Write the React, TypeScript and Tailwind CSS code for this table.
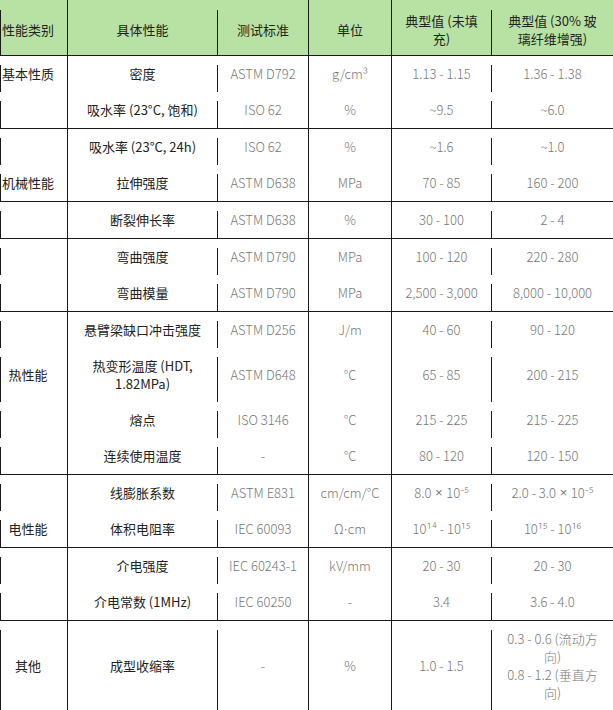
import type { ReactNode } from "react";
import clsx from "clsx";

type Row = {
  cat?: string;
  prop: ReactNode;
  std: string;
  unit: ReactNode;
  v1: ReactNode;
  v2: ReactNode;
};

// latin glyphs that the CJK font draws too wide
const L = ({ children }: { children: ReactNode }) => (
  <span className="whitespace-pre" style={{ fontFamily: '"Liberation Sans", sans-serif' }}>
    {children}
  </span>
);

const groups: Row[][] = [
  [
    { cat: "基本性质", prop: "密度", std: "ASTM D792", unit: "g/cm³", v1: "1.13 - 1.15", v2: "1.36 - 1.38" },
    { prop: "吸水率 (23°C, 饱和)", std: "ISO 62", unit: "%", v1: "~9.5", v2: "~6.0" },
  ],
  [
    { prop: "吸水率 (23°C, 24h)", std: "ISO 62", unit: "%", v1: "~1.6", v2: "~1.0" },
    { cat: "机械性能", prop: "拉伸强度", std: "ASTM D638", unit: "MPa", v1: "70 - 85", v2: "160 - 200" },
  ],
  [{ prop: "断裂伸长率", std: "ASTM D638", unit: "%", v1: "30 - 100", v2: "2 - 4" }],
  [
    { prop: "弯曲强度", std: "ASTM D790", unit: "MPa", v1: "100 - 120", v2: "220 - 280" },
    { prop: "弯曲模量", std: "ASTM D790", unit: "MPa", v1: "2,500 - 3,000", v2: "8,000 - 10,000" },
  ],
  [
    { prop: "悬臂梁缺口冲击强度", std: "ASTM D256", unit: "J/m", v1: "40 - 60", v2: "90 - 120" },
    {
      cat: "热性能",
      prop: (
        <>
          热变形温度 (HDT,
          <br />
          1.82MPa)
        </>
      ),
      std: "ASTM D648",
      unit: "°C",
      v1: "65 - 85",
      v2: "200 - 215",
    },
    { prop: "熔点", std: "ISO 3146", unit: "°C", v1: "215 - 225", v2: "215 - 225" },
    { prop: "连续使用温度", std: "-", unit: "°C", v1: "80 - 120", v2: "120 - 150" },
  ],
  [
    {
      prop: "线膨胀系数",
      std: "ASTM E831",
      unit: "cm/cm/°C",
      v1: (
        <>
          8.0<L>{" × "}</L>10⁻⁵
        </>
      ),
      v2: (
        <>
          2.0 - 3.0<L>{" × "}</L>10⁻⁵
        </>
      ),
    },
    {
      cat: "电性能",
      prop: "体积电阻率",
      std: "IEC 60093",
      unit: (
        <>
          Ω<L>·</L>cm
        </>
      ),
      v1: "10¹⁴ - 10¹⁵",
      v2: "10¹⁵ - 10¹⁶",
    },
  ],
  [
    { prop: "介电强度", std: "IEC 60243-1", unit: "kV/mm", v1: "20 - 30", v2: "20 - 30" },
    { prop: "介电常数 (1MHz)", std: "IEC 60250", unit: "-", v1: "3.4", v2: "3.6 - 4.0" },
  ],
  [
    {
      cat: "其他",
      prop: "成型收缩率",
      std: "-",
      unit: "%",
      v1: "1.0 - 1.5",
      v2: (
        <>
          0.3 - 0.6 (流动方
          <br />
          向)
          <br />
          0.8 - 1.2 (垂直方
          <br />
          向)
        </>
      ),
    },
  ],
];

// broken = short vertical segment that starts a bit below the row top
const Cell = ({
  broken,
  head,
  className,
  children,
}: {
  broken?: boolean;
  head?: boolean;
  className?: string;
  children?: ReactNode;
}) => (
  <div className={clsx("flex", !broken && "border-l border-[#1a1a1a]")}>
    {broken && (
      <div className={clsx("w-px shrink-0 bg-[#1a1a1a]", head ? "mt-[10px]" : "mt-[9px]")} />
    )}
    <div
      className={clsx(
        "flex-1 flex items-center justify-center text-center leading-[18px]",
        head ? "pt-[12px] pb-[7px]" : "py-[9px]",
        className
      )}
    >
      {children}
    </div>
  </div>
);

const gridCols = "grid grid-cols-[67px_150px_91px_83px_100px_122px]";
const grey = "text-[#777] font-light whitespace-nowrap";

export default function App() {
  return (
    <div
      className="w-[613px] h-[710px] overflow-hidden bg-white text-[13px] text-[#222]"
      style={{ fontFamily: '"Noto Sans CJK SC", "Noto Sans", sans-serif' }}
    >
      <div className={clsx(gridCols, "bg-[#b8e2a3] border-b border-[#1a1a1a]")}>
        <Cell broken head className="pr-[12px] whitespace-nowrap">
          性能类别
        </Cell>
        <Cell head>具体性能</Cell>
        <Cell broken head>
          测试标准
        </Cell>
        <Cell head>单位</Cell>
        <Cell head>
          典型值 (未填
          <br />
          充)
        </Cell>
        <Cell broken head>
          典型值 (30% 玻
          <br />
          璃纤维增强)
        </Cell>
      </div>

      {groups.map((rows, gi) => (
        <div
          key={gi}
          className={clsx("flex flex-col", gi < groups.length - 1 && "border-b border-[#1a1a1a]")}
        >
          {rows.map((r, ri) => (
            <div key={ri} className={gridCols}>
              <Cell broken className="pr-[12px] whitespace-nowrap">
                {r.cat}
              </Cell>
              <Cell className="px-1">{r.prop}</Cell>
              <Cell broken className={grey}>
                {r.std}
              </Cell>
              <Cell className={grey}>{r.unit}</Cell>
              <Cell className={grey}>{r.v1}</Cell>
              <Cell broken className={grey}>
                {r.v2}
              </Cell>
            </div>
          ))}
        </div>
      ))}
    </div>
  );
}
